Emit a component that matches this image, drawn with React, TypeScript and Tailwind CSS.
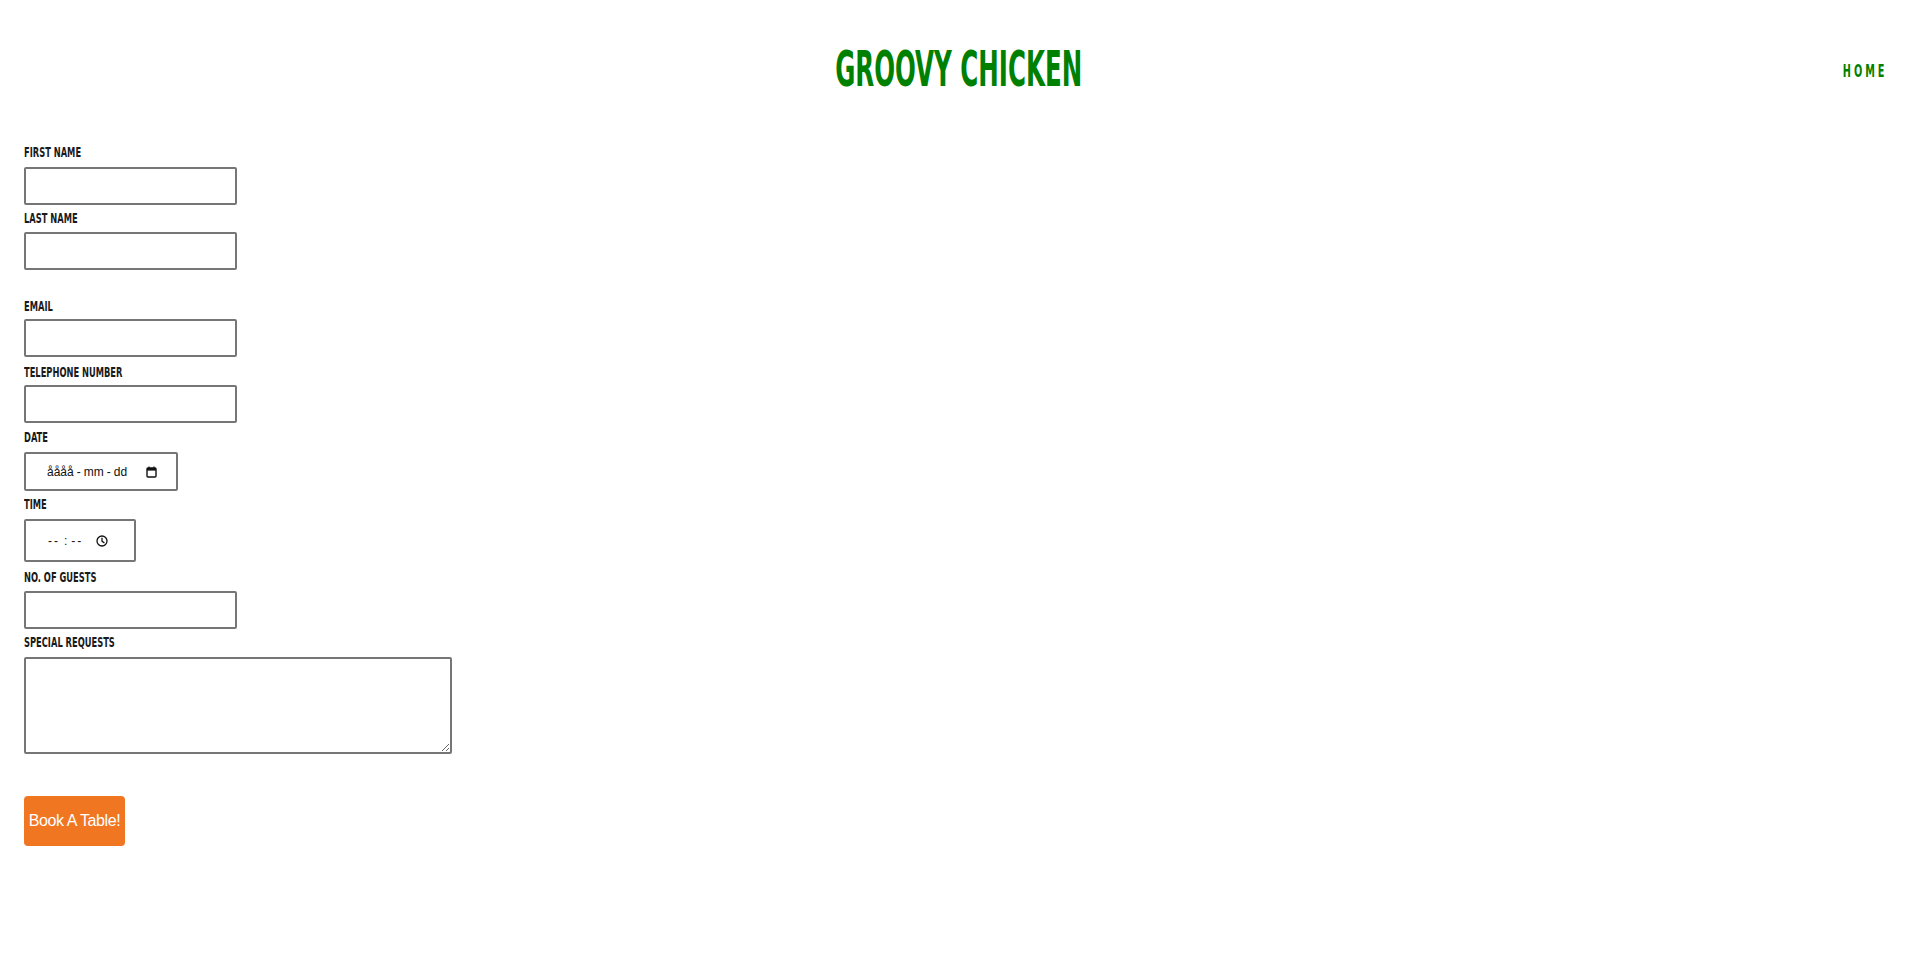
import React from 'react'

const bebas = { fontFamily: '"Liberation Sans Narrow", "DejaVu Sans Condensed", "Liberation Sans", sans-serif' }
const plain = { fontFamily: '"Liberation Sans", Arial, sans-serif' }

const Label = ({ text }: { text: string }) => (
   <label className="block h-[20px] leading-[20px] text-[14px] font-bold text-[#1a1a1a] whitespace-nowrap" style={bebas}>
      <span className="inline-block origin-left scale-x-[0.66]">{text}</span>
   </label>
)

const TextBox = () => (
   <input type="text" className="block w-[213px] h-[38px] border-2 border-[#767676] rounded-[2px] bg-white px-2 outline-none" />
)

const App = () => {
   return (
      <div className="min-h-[961px] bg-white">
         <header className="relative flex items-center justify-center h-[138px]">
            <h1 className="text-[50px] font-bold text-[#008000] leading-none whitespace-nowrap" style={bebas}>
               <span className="inline-block scale-x-[0.545]">GROOVY CHICKEN</span>
            </h1>
            <nav className="absolute right-[30px] top-[59px]">
               <a href="#" className="text-[18px] font-bold text-[#008000] tracking-[5px] leading-[20px]" style={bebas}>
                  <span className="inline-block origin-right scale-x-[0.6]">HOME</span>
               </a>
            </nav>
         </header>

         <form className="pl-[24px] flex flex-col">
            <div className="mt-[4px]">
               <Label text="FIRST NAME" />
               <div className="mt-[5px]"><TextBox /></div>
            </div>
            <div className="mt-[3px]">
               <Label text="LAST NAME" />
               <div className="mt-[4px]"><TextBox /></div>
            </div>
            <div className="mt-[26px]">
               <Label text="EMAIL" />
               <div className="mt-[3px]"><TextBox /></div>
            </div>
            <div className="mt-[5px]">
               <Label text="TELEPHONE NUMBER" />
               <div className="mt-[3px]"><TextBox /></div>
            </div>
            <div className="mt-[4px]">
               <Label text="DATE" />
               <div className="mt-[5px] flex items-center w-[154px] h-[39px] border-2 border-[#767676] rounded-[2px] pl-[21px]">
                  <span className="flex items-center text-[12px] text-[#111]" style={plain}>
                     <span>åååå</span>
                     <span className="mx-[3px]">-</span>
                     <span>mm</span>
                     <span className="mx-[3px]">-</span>
                     <span>dd</span>
                  </span>
                  <svg className="ml-[19px]" width="11" height="12" viewBox="0 0 11 12" fill="none">
                     <rect x="1" y="2" width="9" height="9" rx="1" stroke="#111" strokeWidth="1.4" />
                     <rect x="1" y="2" width="9" height="2.6" fill="#111" />
                     <path d="M3 0.5V2.5M8 0.5V2.5" stroke="#111" strokeWidth="1.2" />
                  </svg>
               </div>
            </div>
            <div className="mt-[3px]">
               <Label text="TIME" />
               <div className="mt-[5px] flex items-center w-[112px] h-[43px] border-2 border-[#767676] rounded-[2px] pl-[22px]">
                  <span className="flex items-center text-[12px] text-[#111]" style={plain}>
                     <span className="tracking-[2px]">--</span>
                     <span className="mx-[4px]">:</span>
                     <span className="tracking-[2px]">--</span>
                  </span>
                  <svg className="ml-[13px]" width="12" height="12" viewBox="0 0 12 12" fill="none">
                     <circle cx="6" cy="6" r="5" stroke="#111" strokeWidth="1.3" />
                     <path d="M6 3.2V6.2L8 7.6" stroke="#111" strokeWidth="1.3" strokeLinecap="round" />
                  </svg>
               </div>
            </div>
            <div className="mt-[5px]">
               <Label text="NO. OF GUESTS" />
               <div className="mt-[4px]"><TextBox /></div>
            </div>
            <div className="mt-[3px]">
               <Label text="SPECIAL REQUESTS" />
               <div className="mt-[5px]">
                  <textarea className="block w-[428px] h-[97px] border-2 border-[#767676] rounded-[2px] outline-none" />
               </div>
            </div>
            <div className="mt-[42px]">
               <button
                  type="button"
                  className="w-[101px] h-[50px] bg-[#f07622] text-white rounded-[4px] text-[16px] tracking-[-0.4px] text-center"
                  style={plain}
               >
                  Book A Table!
               </button>
            </div>
         </form>
      </div>
   )
}

export default App
